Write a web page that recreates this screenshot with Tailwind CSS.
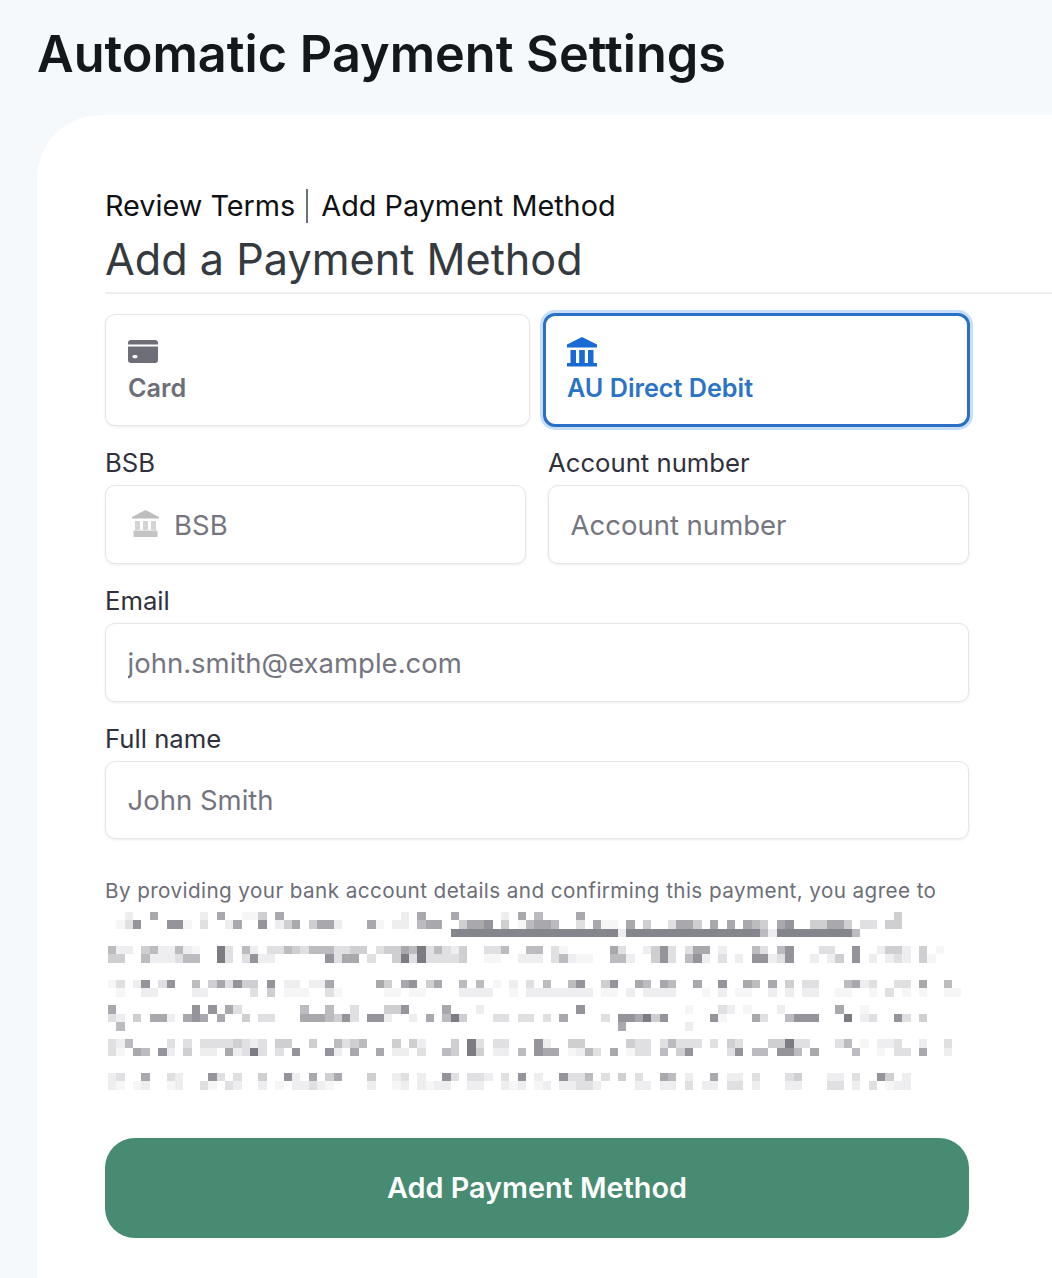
<!DOCTYPE html>
<html lang="en">

<head>
    <meta charset="UTF-8" />
    <title>Automatic Payment Settings</title>
    <script src="https://cdn.jsdelivr.net/npm/@tailwindcss/browser@4"></script>
</head>

<body class="bg-[#f5f9fc] h-[1278px] overflow-hidden font-['Inter','Liberation_Sans',sans-serif] text-[#30313d]">

    <h1 class="pl-[37px] pt-[26px] h-[115px] text-[50.4px] leading-[56px] font-semibold text-[#14171c]">Automatic Payment Settings</h1>

    <main class="ml-[37px] bg-white rounded-tl-[64px] h-[1163px] pl-[68px] pt-[74px]">

        <!-- Steps -->
        <div class="flex items-center h-[34px] text-[28.8px] leading-[34px] text-[#0f1115]">
            <span>Review Terms</span>
            <span class="w-[2px] h-[34px] bg-[#6b7180] ml-[11px] mr-[13px]"></span>
            <span>Add Payment Method</span>
        </div>
        <h2 class="text-[43.2px] leading-[52px] text-[#353a40] font-normal mt-[10px]">Add a Payment Method</h2>
        <div class="h-[2px] bg-[#eceef0] mt-[7px]"></div>

        <form class="w-[864px]">
            <!-- Payment type tabs -->
            <div class="flex items-center gap-[13px] mt-[19px]">
                <div class="shrink-0 w-[425px] h-[112px] bg-white border border-[#e6e6e6] rounded-[10px] shadow-[0_1px_3px_rgba(0,0,0,0.08)] pl-[22px] pt-[25px]">
                    <svg class="block" width="30" height="24" viewBox="0 0 30 24" fill="#6d6e78">
                        <path d="M0 4.500V3a3 3 0 0 1 3-3h24a3 3 0 0 1 3 3v1.500z" />
                        <path fill-rule="evenodd" d="M0 6.500h30V20a3 3 0 0 1-3 3H3a3 3 0 0 1-3-3zM6 15a1.600 1.600 0 0 0 0 3.200h2a1.600 1.600 0 0 0 0-3.200z" />
                    </svg>
                    <div class="mt-[9px] text-[25.2px] leading-[30px] font-semibold text-[#6d6e78]">Card</div>
                </div>
                <div class="shrink-0 w-[427px] h-[114px] bg-white border-[3px] border-[#2a70c4] rounded-[12px] shadow-[0_0_0_3px_#c8def6] pl-[21px] pt-[21px]">
                    <svg class="block" width="30" height="30" viewBox="0 0 30 30" fill="#1a6ad6">
                        <path d="M15 0 30 7.500V10.500H0V7.500z" />
                        <path d="M3.500 13h5.500v13H3.500zM12.200 13h5.600v13h-5.600zM21 13h5.500v13H21zM0 26h30v3.500H0z" />
                    </svg>
                    <div class="mt-[6px] text-[25.2px] leading-[30px] font-semibold text-[#2b73c4]">AU Direct Debit</div>
                </div>
            </div>

            <!-- Bank fields -->
            <div class="grid grid-cols-2 gap-x-[22px] mt-[20px]">
                <label class="block">
                    <span class="block h-[32px] mb-[6px] text-[25.7px] leading-[32px]">BSB</span>
                    <span class="relative block">
                        <svg class="absolute left-[27px] top-[25px]" width="27" height="27" viewBox="0 0 27 27">
                            <path fill="#bdbdbd" d="M13.500 0 27 7v1.500H0V7z" />
                            <path fill="#d4d4d4" d="M3 11h5v9H3zM11 11h5v9h-5zM19 11h5v9h-5z" />
                            <path fill="#c4c4c4" d="M1.500 20.500h24V27h-24z" />
                        </svg>
                        <input placeholder="BSB" class="w-full h-[79px] bg-white border border-[#e6e6e6] rounded-[10px] shadow-[0_1px_3px_rgba(0,0,0,0.08)] pl-[68px] text-[27.5px] text-[#30313d] placeholder-[#75757f]" />
                    </span>
                </label>
                <label class="block">
                    <span class="block h-[32px] mb-[6px] text-[25.7px] leading-[32px]">Account number</span>
                    <input placeholder="Account number" class="w-full h-[79px] bg-white border border-[#e6e6e6] rounded-[10px] shadow-[0_1px_3px_rgba(0,0,0,0.08)] pl-[21.5px] text-[27.5px] placeholder-[#75757f]" />
                </label>
            </div>

            <label class="block mt-[21px]">
                <span class="block h-[32px] mb-[6px] text-[25.7px] leading-[32px]">Email</span>
                <input placeholder="john.smith@example.com" class="w-full h-[79px] bg-white border border-[#e6e6e6] rounded-[10px] shadow-[0_1px_3px_rgba(0,0,0,0.08)] pl-[21.5px] text-[27.5px] placeholder-[#75757f]" />
            </label>

            <label class="block mt-[21px]">
                <span class="block h-[32px] mb-[6px] text-[25.7px] leading-[32px]">Full name</span>
                <input placeholder="John Smith" class="w-full h-[78px] bg-white border border-[#e6e6e6] rounded-[10px] shadow-[0_1px_3px_rgba(0,0,0,0.08)] pl-[21.5px] text-[27.5px] placeholder-[#75757f]" />
            </label>

            <!-- Mandate text, blurred in the source -->
            <p class="mt-[36px] text-[20.7px] leading-[32px] tracking-[0.4px] text-[#6d6e78] whitespace-nowrap">By providing your bank account details and confirming this payment, you agree to</p>
            <svg id="mosaic" class="block mt-[5px]" width="864" height="178" shape-rendering="crispEdges" aria-hidden="true"></svg>

            <button type="button" class="block w-full h-[100px] mt-[48px] bg-[#468b72] rounded-[30px] text-white text-[28.8px] font-semibold">Add Payment Method</button>
        </form>
    </main>

    <script>
        // blurred lines: row -> "column:shade" pairs
        const rows = {
            0: '2:2 5:6 11:2 13:6 16:1 17:1 18:4 20:6 35:2 37:6 41:6 47:2 49:6 51:5 56:6 94:4',
            1: '1:1 2:3 3:7 7:7 8:7 9:1 11:3 14:2 15:6 18:7 20:2 21:4 22:6 24:4 25:6 26:6 27:2 31:6 32:1 34:2 35:2 37:5 38:6 39:6 42:4 43:6 44:6 45:7 47:4 49:1 50:5 51:6 52:6 53:5 56:3 58:6 59:1 60:1 62:6 64:4 67:3 68:6 69:6 70:4 72:6 74:6 76:6 77:5 78:4 80:6 81:7 84:4 85:4 86:6 87:6 88:4 90:3 91:3 93:4 94:4',
            2: '41:9 42:9 43:9 44:9 45:9 46:9 47:9 48:9 49:9 50:9 51:9 52:9 53:9 54:9 55:9 56:9 57:9 58:9 59:9 60:9 61:2 62:9 63:9 64:9 65:9 66:9 67:9 68:9 69:9 70:9 71:9 72:9 73:9 74:9 75:9 76:9 77:9 78:5 79:2 80:9 81:9 82:9 83:9 84:9 85:9 86:9 87:9 88:9 89:5',
            4: '0:5 1:2 2:2 4:4 5:5 6:2 7:2 8:5 9:2 10:1 13:8 14:3 16:5 17:2 19:3 20:3 21:5 22:4 23:3 24:5 25:5 26:5 27:3 28:3 29:4 30:4 32:3 33:4 34:4 35:6 36:5 37:8 38:3 39:5 40:3 41:2 42:4 45:3 46:3 47:5 50:5 51:5 53:3 54:1 60:6 61:3 64:2 65:4 66:7 67:3 69:3 70:6 71:6 73:2 77:5 78:3 80:5 81:7 85:3 86:3 89:7 92:2 93:4 94:4 95:2 97:4 99:1',
            5: '0:4 1:4 4:5 5:2 6:2 7:2 8:3 9:5 10:5 13:8 14:3 16:3 17:7 18:2 19:2 26:7 27:3 28:6 29:6 31:3 34:4 35:8 36:3 37:8 38:3 39:3 40:3 41:3 42:4 45:1 46:1 49:2 50:2 51:2 53:3 54:5 55:2 56:1 57:1 60:5 61:5 62:2 65:4 66:7 67:3 69:5 70:7 71:2 73:3 75:2 77:7 78:7 79:2 80:3 81:7 84:2 86:2 87:4 89:7 91:2 93:2 94:3 95:2 97:4 98:1',
            8: '0:1 1:3 3:2 4:7 6:3 7:7 10:5 12:4 13:6 14:3 15:7 16:4 17:4 19:7 21:2 22:2 24:2 25:2 26:6 32:6 33:4 35:6 36:7 38:4 39:6 42:5 44:5 46:1 48:2 50:3 52:5 55:5 56:7 59:4 60:7 63:6 64:5 66:6 67:5 70:6 73:7 76:6 77:5 79:6 81:4 83:3 84:3 88:5 89:6 90:2 91:3 94:3 95:3 97:6 100:5',
            9: '1:1 4:2 5:2 10:2 11:2 17:3 19:4 21:1 22:1 23:1 26:3 27:1 33:1 34:1 36:1 37:1 42:2 43:2 44:2 45:2 48:1 50:2 51:2 52:2 53:2 54:2 55:2 56:2 57:2 59:1 60:1 62:2 64:2 65:2 66:2 67:2 71:1 73:2 75:1 76:1 79:2 81:2 83:2 84:2 87:1 88:1 91:1 93:3 95:1 97:1 100:1 101:1',
            11: '0:6 10:7 12:7 14:6 15:3 23:5 26:5 29:3 33:4 34:4 35:7 40:6 44:2 56:7 69:1 73:3 74:2 76:1 80:2 87:6 90:1',
            12: '0:3 1:2 3:4 5:6 6:6 7:2 9:6 10:7 11:6 13:6 16:4 18:3 19:3 23:6 24:6 25:6 26:5 27:4 28:7 29:3 31:7 32:7 33:2 36:2 38:6 40:5 41:8 42:4 46:3 47:3 49:3 50:3 52:3 54:6 59:3 61:7 62:7 63:6 64:8 65:4 66:7 72:7 73:1 77:6 78:3 81:5 82:7 83:7 84:7 88:8 90:2 91:3 94:7 95:3 97:4',
            13: '1:5 61:6 69:2',
            15: '0:3 1:2 2:5 7:3 9:3 11:3 12:3 13:3 14:3 15:4 16:3 17:2 18:3 20:4 21:4 24:4 27:5 28:3 29:4 30:5 34:4 36:4 37:2 41:4 43:8 44:3 46:3 47:3 51:7 52:2 55:4 56:4 62:4 63:3 64:3 66:3 67:5 68:3 69:3 70:3 72:3 74:4 75:3 79:4 80:4 81:8 82:3 83:3 87:3 88:5 90:1 92:2 93:2 94:3 97:2 100:3',
            16: '0:3 1:1 3:6 4:5 6:7 7:2 9:4 11:2 12:2 14:6 15:2 16:3 17:8 18:3 20:3 22:7 26:7 27:2 29:6 32:6 34:2 35:2 37:3 40:5 41:4 43:8 44:4 46:2 47:2 49:5 51:7 52:6 53:6 55:1 56:2 57:5 58:3 60:6 62:1 63:3 64:3 66:5 68:4 69:7 74:3 75:7 77:5 78:5 80:7 81:7 82:5 84:6 89:5 92:1 94:3 95:3 97:6 100:2',
            19: '0:2 1:3 4:6 7:3 8:2 12:7 13:3 15:3 18:4 21:7 22:2 24:6 26:4 27:6 31:4 34:2 35:3 37:2 40:7 41:3 43:3 44:3 45:2 47:3 49:7 51:2 54:7 55:3 56:3 57:5 59:3 61:4 63:3 66:6 67:5 69:2 72:6 74:2 75:2 77:3 81:3 82:4 86:2 87:2 89:3 92:7 93:4 95:2',
            20: '0:2 1:1 3:1 4:2 7:1 8:2 11:3 12:1 14:3 15:2 18:2 20:1 22:2 23:2 24:3 25:2 26:1 31:2 34:1 35:2 37:2 38:1 39:2 40:2 43:2 44:2 47:2 48:1 49:2 51:1 52:2 54:2 55:2 56:3 57:3 58:2 63:2 64:2 66:2 67:2 69:3 71:2 72:2 74:3 75:3 77:2 81:2 82:2 86:3 87:3 89:2 91:3 93:1 94:2 95:2',
        };
        const shades = ['#fff', '#f6f6f7', '#eeeef0', '#e0e0e2', '#cfcfd2', '#bcbcc0', '#a8a8ad', '#94949a', '#7c7c82', '#85858d'];
        const mosaic = document.getElementById('mosaic');
        for (const row in rows) {
            for (const pair of rows[row].split(' ')) {
                const [col, shade] = pair.split(':').map(Number);
                const r = document.createElementNS('http://www.w3.org/2000/svg', 'rect');
                r.setAttribute('x', 3 + col * 8.36);
                r.setAttribute('y', row * 8.47);
                r.setAttribute('width', 8.36);
                r.setAttribute('height', 8.47);
                r.setAttribute('fill', shades[shade]);
                mosaic.appendChild(r);
            }
        }
    </script>
</body>

</html>
